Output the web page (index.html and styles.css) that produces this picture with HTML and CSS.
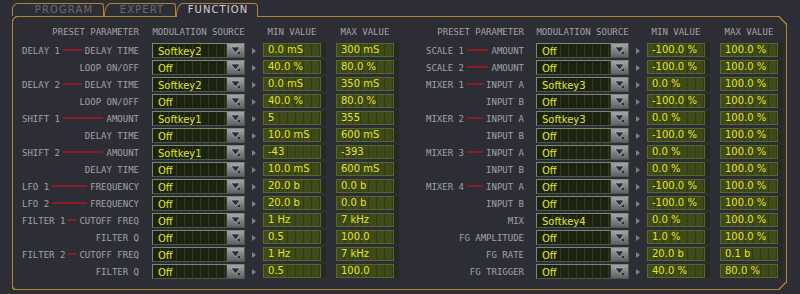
FILE: index.html
```html
<!DOCTYPE html>
<html>
<head>
<meta charset="utf-8">
<link rel="stylesheet" href="styles.css">
</head>
<body>
<div class="tabs">
  <div class="tab tab-program">PROGRAM</div>
  <div class="tab tab-expert">EXPERT</div>
  <div class="tab tab-function">FUNCTION</div>
</div>
<div class="panel">
  <div class="half half-left">
    <div class="row head"><div class="label">PRESET PARAMETER</div><div class="hdd">MODULATION SOURCE</div><div class="arr-sp"></div><div class="hf">MIN VALUE</div><div class="hf">MAX VALUE</div></div>
    <div class="row"><div class="label"><span>DELAY 1</span><i class="rule"></i><span>DELAY TIME</span></div><div class="dd"><span class="dd-text">Softkey2</span><span class="dd-btn"><svg width="12" height="9" viewBox="0 0 12 9"><path d="M1 1 H10 L5.5 7 Z" fill="#2a2c31" stroke="#c4c6ca" stroke-width="0.6"/><rect x="8" y="6" width="2" height="2" fill="#2a2c31"/></svg></span></div><div class="arr"></div><div class="lcd">0.0 mS</div><div class="lcd">300 mS</div></div>
    <div class="row"><div class="label"><span>LOOP ON/OFF</span></div><div class="dd"><span class="dd-text">Off</span><span class="dd-btn"><svg width="12" height="9" viewBox="0 0 12 9"><path d="M1 1 H10 L5.5 7 Z" fill="#2a2c31" stroke="#c4c6ca" stroke-width="0.6"/><rect x="8" y="6" width="2" height="2" fill="#2a2c31"/></svg></span></div><div class="arr"></div><div class="lcd">40.0 %</div><div class="lcd">80.0 %</div></div>
    <div class="row"><div class="label"><span>DELAY 2</span><i class="rule"></i><span>DELAY TIME</span></div><div class="dd"><span class="dd-text">Softkey2</span><span class="dd-btn"><svg width="12" height="9" viewBox="0 0 12 9"><path d="M1 1 H10 L5.5 7 Z" fill="#2a2c31" stroke="#c4c6ca" stroke-width="0.6"/><rect x="8" y="6" width="2" height="2" fill="#2a2c31"/></svg></span></div><div class="arr"></div><div class="lcd">0.0 mS</div><div class="lcd">350 mS</div></div>
    <div class="row"><div class="label"><span>LOOP ON/OFF</span></div><div class="dd"><span class="dd-text">Off</span><span class="dd-btn"><svg width="12" height="9" viewBox="0 0 12 9"><path d="M1 1 H10 L5.5 7 Z" fill="#2a2c31" stroke="#c4c6ca" stroke-width="0.6"/><rect x="8" y="6" width="2" height="2" fill="#2a2c31"/></svg></span></div><div class="arr"></div><div class="lcd">40.0 %</div><div class="lcd">80.0 %</div></div>
    <div class="row"><div class="label"><span>SHIFT 1</span><i class="rule"></i><span>AMOUNT</span></div><div class="dd"><span class="dd-text">Softkey1</span><span class="dd-btn"><svg width="12" height="9" viewBox="0 0 12 9"><path d="M1 1 H10 L5.5 7 Z" fill="#2a2c31" stroke="#c4c6ca" stroke-width="0.6"/><rect x="8" y="6" width="2" height="2" fill="#2a2c31"/></svg></span></div><div class="arr"></div><div class="lcd">5</div><div class="lcd">355</div></div>
    <div class="row"><div class="label"><span>DELAY TIME</span></div><div class="dd"><span class="dd-text">Off</span><span class="dd-btn"><svg width="12" height="9" viewBox="0 0 12 9"><path d="M1 1 H10 L5.5 7 Z" fill="#2a2c31" stroke="#c4c6ca" stroke-width="0.6"/><rect x="8" y="6" width="2" height="2" fill="#2a2c31"/></svg></span></div><div class="arr"></div><div class="lcd">10.0 mS</div><div class="lcd">600 mS</div></div>
    <div class="row"><div class="label"><span>SHIFT 2</span><i class="rule"></i><span>AMOUNT</span></div><div class="dd"><span class="dd-text">Softkey1</span><span class="dd-btn"><svg width="12" height="9" viewBox="0 0 12 9"><path d="M1 1 H10 L5.5 7 Z" fill="#2a2c31" stroke="#c4c6ca" stroke-width="0.6"/><rect x="8" y="6" width="2" height="2" fill="#2a2c31"/></svg></span></div><div class="arr"></div><div class="lcd">-43</div><div class="lcd">-393</div></div>
    <div class="row"><div class="label"><span>DELAY TIME</span></div><div class="dd"><span class="dd-text">Off</span><span class="dd-btn"><svg width="12" height="9" viewBox="0 0 12 9"><path d="M1 1 H10 L5.5 7 Z" fill="#2a2c31" stroke="#c4c6ca" stroke-width="0.6"/><rect x="8" y="6" width="2" height="2" fill="#2a2c31"/></svg></span></div><div class="arr"></div><div class="lcd">10.0 mS</div><div class="lcd">600 mS</div></div>
    <div class="row"><div class="label"><span>LFO 1</span><i class="rule"></i><span>FREQUENCY</span></div><div class="dd"><span class="dd-text">Off</span><span class="dd-btn"><svg width="12" height="9" viewBox="0 0 12 9"><path d="M1 1 H10 L5.5 7 Z" fill="#2a2c31" stroke="#c4c6ca" stroke-width="0.6"/><rect x="8" y="6" width="2" height="2" fill="#2a2c31"/></svg></span></div><div class="arr"></div><div class="lcd">20.0 b</div><div class="lcd">0.0 b</div></div>
    <div class="row"><div class="label"><span>LFO 2</span><i class="rule"></i><span>FREQUENCY</span></div><div class="dd"><span class="dd-text">Off</span><span class="dd-btn"><svg width="12" height="9" viewBox="0 0 12 9"><path d="M1 1 H10 L5.5 7 Z" fill="#2a2c31" stroke="#c4c6ca" stroke-width="0.6"/><rect x="8" y="6" width="2" height="2" fill="#2a2c31"/></svg></span></div><div class="arr"></div><div class="lcd">20.0 b</div><div class="lcd">0.0 b</div></div>
    <div class="row"><div class="label"><span>FILTER 1</span><i class="rule"></i><span>CUTOFF FREQ</span></div><div class="dd"><span class="dd-text">Off</span><span class="dd-btn"><svg width="12" height="9" viewBox="0 0 12 9"><path d="M1 1 H10 L5.5 7 Z" fill="#2a2c31" stroke="#c4c6ca" stroke-width="0.6"/><rect x="8" y="6" width="2" height="2" fill="#2a2c31"/></svg></span></div><div class="arr"></div><div class="lcd">1 Hz</div><div class="lcd">7 kHz</div></div>
    <div class="row"><div class="label"><span>FILTER Q</span></div><div class="dd"><span class="dd-text">Off</span><span class="dd-btn"><svg width="12" height="9" viewBox="0 0 12 9"><path d="M1 1 H10 L5.5 7 Z" fill="#2a2c31" stroke="#c4c6ca" stroke-width="0.6"/><rect x="8" y="6" width="2" height="2" fill="#2a2c31"/></svg></span></div><div class="arr"></div><div class="lcd">0.5</div><div class="lcd">100.0</div></div>
    <div class="row"><div class="label"><span>FILTER 2</span><i class="rule"></i><span>CUTOFF FREQ</span></div><div class="dd"><span class="dd-text">Off</span><span class="dd-btn"><svg width="12" height="9" viewBox="0 0 12 9"><path d="M1 1 H10 L5.5 7 Z" fill="#2a2c31" stroke="#c4c6ca" stroke-width="0.6"/><rect x="8" y="6" width="2" height="2" fill="#2a2c31"/></svg></span></div><div class="arr"></div><div class="lcd">1 Hz</div><div class="lcd">7 kHz</div></div>
    <div class="row"><div class="label"><span>FILTER Q</span></div><div class="dd"><span class="dd-text">Off</span><span class="dd-btn"><svg width="12" height="9" viewBox="0 0 12 9"><path d="M1 1 H10 L5.5 7 Z" fill="#2a2c31" stroke="#c4c6ca" stroke-width="0.6"/><rect x="8" y="6" width="2" height="2" fill="#2a2c31"/></svg></span></div><div class="arr"></div><div class="lcd">0.5</div><div class="lcd">100.0</div></div>
  </div>
  <div class="half half-right">
    <div class="row head"><div class="label">PRESET PARAMETER</div><div class="hdd">MODULATION SOURCE</div><div class="arr-sp"></div><div class="hf">MIN VALUE</div><div class="hf">MAX VALUE</div></div>
    <div class="row"><div class="label"><span>SCALE 1</span><i class="rule"></i><span>AMOUNT</span></div><div class="dd"><span class="dd-text">Off</span><span class="dd-btn"><svg width="12" height="9" viewBox="0 0 12 9"><path d="M1 1 H10 L5.5 7 Z" fill="#2a2c31" stroke="#c4c6ca" stroke-width="0.6"/><rect x="8" y="6" width="2" height="2" fill="#2a2c31"/></svg></span></div><div class="arr"></div><div class="lcd">-100.0 %</div><div class="lcd">100.0 %</div></div>
    <div class="row"><div class="label"><span>SCALE 2</span><i class="rule"></i><span>AMOUNT</span></div><div class="dd"><span class="dd-text">Off</span><span class="dd-btn"><svg width="12" height="9" viewBox="0 0 12 9"><path d="M1 1 H10 L5.5 7 Z" fill="#2a2c31" stroke="#c4c6ca" stroke-width="0.6"/><rect x="8" y="6" width="2" height="2" fill="#2a2c31"/></svg></span></div><div class="arr"></div><div class="lcd">-100.0 %</div><div class="lcd">100.0 %</div></div>
    <div class="row"><div class="label"><span>MIXER 1</span><i class="rule"></i><span>INPUT A</span></div><div class="dd"><span class="dd-text">Softkey3</span><span class="dd-btn"><svg width="12" height="9" viewBox="0 0 12 9"><path d="M1 1 H10 L5.5 7 Z" fill="#2a2c31" stroke="#c4c6ca" stroke-width="0.6"/><rect x="8" y="6" width="2" height="2" fill="#2a2c31"/></svg></span></div><div class="arr"></div><div class="lcd">0.0 %</div><div class="lcd">100.0 %</div></div>
    <div class="row"><div class="label"><span>INPUT B</span></div><div class="dd"><span class="dd-text">Off</span><span class="dd-btn"><svg width="12" height="9" viewBox="0 0 12 9"><path d="M1 1 H10 L5.5 7 Z" fill="#2a2c31" stroke="#c4c6ca" stroke-width="0.6"/><rect x="8" y="6" width="2" height="2" fill="#2a2c31"/></svg></span></div><div class="arr"></div><div class="lcd">-100.0 %</div><div class="lcd">100.0 %</div></div>
    <div class="row"><div class="label"><span>MIXER 2</span><i class="rule"></i><span>INPUT A</span></div><div class="dd"><span class="dd-text">Softkey3</span><span class="dd-btn"><svg width="12" height="9" viewBox="0 0 12 9"><path d="M1 1 H10 L5.5 7 Z" fill="#2a2c31" stroke="#c4c6ca" stroke-width="0.6"/><rect x="8" y="6" width="2" height="2" fill="#2a2c31"/></svg></span></div><div class="arr"></div><div class="lcd">0.0 %</div><div class="lcd">100.0 %</div></div>
    <div class="row"><div class="label"><span>INPUT B</span></div><div class="dd"><span class="dd-text">Off</span><span class="dd-btn"><svg width="12" height="9" viewBox="0 0 12 9"><path d="M1 1 H10 L5.5 7 Z" fill="#2a2c31" stroke="#c4c6ca" stroke-width="0.6"/><rect x="8" y="6" width="2" height="2" fill="#2a2c31"/></svg></span></div><div class="arr"></div><div class="lcd">-100.0 %</div><div class="lcd">100.0 %</div></div>
    <div class="row"><div class="label"><span>MIXER 3</span><i class="rule"></i><span>INPUT A</span></div><div class="dd"><span class="dd-text">Off</span><span class="dd-btn"><svg width="12" height="9" viewBox="0 0 12 9"><path d="M1 1 H10 L5.5 7 Z" fill="#2a2c31" stroke="#c4c6ca" stroke-width="0.6"/><rect x="8" y="6" width="2" height="2" fill="#2a2c31"/></svg></span></div><div class="arr"></div><div class="lcd">0.0 %</div><div class="lcd">100.0 %</div></div>
    <div class="row"><div class="label"><span>INPUT B</span></div><div class="dd"><span class="dd-text">Off</span><span class="dd-btn"><svg width="12" height="9" viewBox="0 0 12 9"><path d="M1 1 H10 L5.5 7 Z" fill="#2a2c31" stroke="#c4c6ca" stroke-width="0.6"/><rect x="8" y="6" width="2" height="2" fill="#2a2c31"/></svg></span></div><div class="arr"></div><div class="lcd">0.0 %</div><div class="lcd">100.0 %</div></div>
    <div class="row"><div class="label"><span>MIXER 4</span><i class="rule"></i><span>INPUT A</span></div><div class="dd"><span class="dd-text">Off</span><span class="dd-btn"><svg width="12" height="9" viewBox="0 0 12 9"><path d="M1 1 H10 L5.5 7 Z" fill="#2a2c31" stroke="#c4c6ca" stroke-width="0.6"/><rect x="8" y="6" width="2" height="2" fill="#2a2c31"/></svg></span></div><div class="arr"></div><div class="lcd">-100.0 %</div><div class="lcd">100.0 %</div></div>
    <div class="row"><div class="label"><span>INPUT B</span></div><div class="dd"><span class="dd-text">Off</span><span class="dd-btn"><svg width="12" height="9" viewBox="0 0 12 9"><path d="M1 1 H10 L5.5 7 Z" fill="#2a2c31" stroke="#c4c6ca" stroke-width="0.6"/><rect x="8" y="6" width="2" height="2" fill="#2a2c31"/></svg></span></div><div class="arr"></div><div class="lcd">-100.0 %</div><div class="lcd">100.0 %</div></div>
    <div class="row"><div class="label"><span>MIX</span></div><div class="dd"><span class="dd-text">Softkey4</span><span class="dd-btn"><svg width="12" height="9" viewBox="0 0 12 9"><path d="M1 1 H10 L5.5 7 Z" fill="#2a2c31" stroke="#c4c6ca" stroke-width="0.6"/><rect x="8" y="6" width="2" height="2" fill="#2a2c31"/></svg></span></div><div class="arr"></div><div class="lcd">0.0 %</div><div class="lcd">100.0 %</div></div>
    <div class="row"><div class="label"><span>FG AMPLITUDE</span></div><div class="dd"><span class="dd-text">Off</span><span class="dd-btn"><svg width="12" height="9" viewBox="0 0 12 9"><path d="M1 1 H10 L5.5 7 Z" fill="#2a2c31" stroke="#c4c6ca" stroke-width="0.6"/><rect x="8" y="6" width="2" height="2" fill="#2a2c31"/></svg></span></div><div class="arr"></div><div class="lcd">1.0 %</div><div class="lcd">100.0 %</div></div>
    <div class="row"><div class="label"><span>FG RATE</span></div><div class="dd"><span class="dd-text">Off</span><span class="dd-btn"><svg width="12" height="9" viewBox="0 0 12 9"><path d="M1 1 H10 L5.5 7 Z" fill="#2a2c31" stroke="#c4c6ca" stroke-width="0.6"/><rect x="8" y="6" width="2" height="2" fill="#2a2c31"/></svg></span></div><div class="arr"></div><div class="lcd">20.0 b</div><div class="lcd">0.1 b</div></div>
    <div class="row"><div class="label"><span>FG TRIGGER</span></div><div class="dd"><span class="dd-text">Off</span><span class="dd-btn"><svg width="12" height="9" viewBox="0 0 12 9"><path d="M1 1 H10 L5.5 7 Z" fill="#2a2c31" stroke="#c4c6ca" stroke-width="0.6"/><rect x="8" y="6" width="2" height="2" fill="#2a2c31"/></svg></span></div><div class="arr"></div><div class="lcd">40.0 %</div><div class="lcd">80.0 %</div></div>
  </div>
</div>
</body>
</html>
```

FILE: styles.css
```css
html, body {
  margin: 0;
  padding: 0;
}
body {
  width: 800px;
  height: 294px;
  overflow: hidden;
  background: #2d2e35;
  font-family: "DejaVu Sans Mono", monospace;
}

/* ---------- tabs ---------- */
.tabs {
  display: flex;
  align-items: flex-start;
  height: 13px;
  margin: 3px 0 0 12px;
}
.tab {
  box-sizing: border-box;
  height: 13px;
  border-top: 1px solid #b5822f;
  font-family: "DejaVu Sans", sans-serif;
  font-size: 10px;
  letter-spacing: 1.1px;
  line-height: 12px;
  color: #696b72;
  display: flex;
  align-items: center;
  justify-content: center;
}
.tab-program {
  width: 92px;
  padding-left: 12px;
  border-left: 1px solid #b5822f;
  border-right: 1px solid #b5822f;
  border-top-left-radius: 6px;
  border-top-right-radius: 3px;
}
.tab-expert {
  width: 72px;
  padding-left: 4px;
  border-left: 1px solid #b5822f;
  border-right: 1px solid #b5822f;
  border-top-left-radius: 7px 12px;
  border-top-right-radius: 3px;
}
.tab-function {
  width: 82px;
  height: 14px;
  margin-bottom: -1px;
  padding-bottom: 1px;
  padding-left: 2px;
  position: relative;
  z-index: 1;
  background: #2d2e35;
  color: #d3d4d8;
  border-left: 1px solid #b5822f;
  border-right: 1px solid #b5822f;
  border-top-left-radius: 7px 12px;
  border-top-right-radius: 4px;
}

/* ---------- panel ---------- */
.panel {
  box-sizing: border-box;
  width: 775px;
  height: 274px;
  margin-left: 12px;
  border: 1px solid #b5822f;
  border-radius: 6px 8px 8px 4px;
  corner-top-right-shape: bevel;
  corner-bottom-right-shape: bevel;
  padding: 9px 0 0 9px;
  display: flex;
  gap: 17px;
}
.half {
  display: flex;
  flex-direction: column;
  gap: 2px;
}
.row {
  display: flex;
  align-items: flex-start;
  height: 15px;
}
.row.head {
  height: 13px;
  margin-bottom: 2px;
  align-items: center;
}
.label {
  width: 117px;
  margin-right: 13px;
  height: 15px;
  display: flex;
  align-items: center;
  justify-content: flex-end;
  font-size: 9px;
  color: #a1a2a8;
  white-space: nowrap;
}
.head .label,
.hdd,
.hf {
  height: 13px;
  line-height: 13px;
  font-size: 9px;
  color: #a1a2a8;
  white-space: nowrap;
}
.half-right .label {
  width: 98px;
  margin-right: 12px;
}
.label span:first-child:not(:last-child) {
  margin-right: auto;
}
.rule {
  flex: 1;
  align-self: flex-start;
  height: 2px;
  margin: 6px 3px 0;
  background: #8f1b24;
}
.hdd {
  width: 93px;
  text-align: center;
}
.arr-sp {
  width: 18px;
}
.hf {
  width: 58px;
  margin-right: 15px;
  text-align: center;
}

/* ---------- dropdown ---------- */
.dd {
  box-sizing: border-box;
  width: 93px;
  height: 15px;
  display: flex;
  border: 1px solid;
  border-color: #7d8874 #4e5748 #4e5748 #7d8874;
  background:
    repeating-linear-gradient(90deg, transparent 0 7px, rgba(70, 90, 45, 0.45) 7px 8px),
    #1b2411;
}
.dd-text {
  flex: 1;
  padding: 1px 0 0 5px;
  font-family: "DejaVu Sans", sans-serif;
  font-size: 10px;
  line-height: 13px;
  color: #e3e320;
  overflow: hidden;
}
.dd-btn {
  width: 17px;
  display: flex;
  align-items: center;
  justify-content: center;
  border-left: 1px solid #3b3d41;
  background: linear-gradient(#a2a4a8, #7c7e83 55%, #606267);
}
.dd-btn svg {
  display: block;
}

/* ---------- arrow ---------- */
.arr {
  width: 18px;
  height: 15px;
  display: flex;
  align-items: center;
  justify-content: center;
}
.arr::before {
  content: "";
  width: 0;
  height: 0;
  border-left: 4px solid #7f8187;
  border-top: 3px solid transparent;
  border-bottom: 3px solid transparent;
}

/* ---------- LCD value fields ---------- */
.lcd {
  box-sizing: border-box;
  width: 58px;
  height: 14px;
  margin-right: 15px;
  padding-left: 4px;
  border: 1px solid #5a6632;
  background:
    repeating-linear-gradient(90deg, transparent 0 7px, rgba(25, 32, 8, 0.35) 7px 8px),
    #3f4a19;
  box-shadow: 5px 0 0 #262a1f;
  font-family: "DejaVu Sans", sans-serif;
  font-size: 10px;
  line-height: 12px;
  color: #e6e61e;
  white-space: nowrap;
}
```
